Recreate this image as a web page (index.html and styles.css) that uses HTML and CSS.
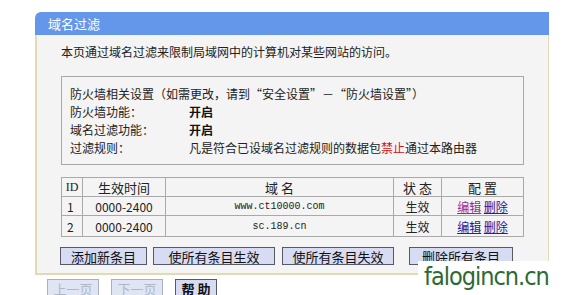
FILE: index.html
```html
<!DOCTYPE html>
<html>
<head>
    <meta charset="UTF-8">
    <title>域名过滤</title>
    <link rel="stylesheet" href="styles.css">
</head>
<body>
    <div class="panel">
        <div class="panel-title">域名过滤</div>
        <div class="panel-body">
            <p class="intro">本页通过域名过滤来限制局域网中的计算机对某些网站的访问。</p>

            <div class="info-box">
                <div class="info-row">防火墙相关设置（如需更改，请到“安全设置”－“防火墙设置”）</div>
                <div class="info-row"><span class="label">防火墙功能：</span><b>开启</b></div>
                <div class="info-row"><span class="label">域名过滤功能：</span><b>开启</b></div>
                <div class="info-row"><span class="label">过滤规则：</span>凡是符合已设域名过滤规则的数据包<span class="red">禁止</span>通过本路由器</div>
            </div>

            <table class="rules">
                <tr class="head">
                    <td class="c-id">ID</td>
                    <td class="c-time">生效时间</td>
                    <td class="c-domain">域 名</td>
                    <td class="c-state">状 态</td>
                    <td class="c-conf">配 置</td>
                </tr>
                <tr>
                    <td class="c-id left">1</td>
                    <td>0000-2400</td>
                    <td class="mono">www.ct10000.com</td>
                    <td>生效</td>
                    <td><a href="#" class="visited">编辑</a> <a href="#">删除</a></td>
                </tr>
                <tr class="last">
                    <td class="c-id left">2</td>
                    <td>0000-2400</td>
                    <td class="mono">sc.189.cn</td>
                    <td>生效</td>
                    <td><a href="#">编辑</a> <a href="#">删除</a></td>
                </tr>
            </table>

            <div class="actions">
                <button class="btn b-add">添加新条目</button>
                <button class="btn b-on">使所有条目生效</button>
                <button class="btn b-off">使所有条目失效</button>
                <button class="btn b-del">删除所有条目</button>
            </div>
        </div>
    </div>

    <div class="pager">
        <button class="btn small" disabled>上一页</button>
        <button class="btn small" disabled>下一页</button>
        <button class="btn help">帮 助</button>
    </div>

    <div class="mark">falogincn.cn</div>
</body>
</html>
```

FILE: styles.css
```css
body {
    margin: 0;
    background-color: #ffffff;
    font-family: "Noto Sans CJK SC", "Liberation Sans", sans-serif;
    font-size: 12px;
    color: #222222;
    width: 588px;
    height: 295px;
    overflow: hidden;
    position: relative;
}

.panel {
    margin: 12px 0 0 35px;
    width: 514px;
}

.panel-title {
    height: 23px;
    line-height: 23px;
    padding-left: 13px;
    background-color: #6496ea;
    color: #ffffff;
    font-size: 13px;
    border-top-left-radius: 6px;
}

.panel-body {
    background-color: #f4f4f4;
    border-left: 2px solid #e4d9b2;
    border-right: 1px solid #e4d9b2;
    border-bottom: 2px solid #e4d9b2;
    padding: 8px 24px 8px 24px;
}

.intro {
    margin: 0;
    line-height: 18px;
}

.info-box {
    margin-top: 15px;
    border: 1px solid #a8a8a8;
    padding: 8px 8px 7px 8px;
    height: 72px;
    line-height: 18px;
}

.info-box b {
    font-weight: bold;
    color: #111111;
}

.label {
    display: inline-block;
    width: 119px;
}

.red {
    color: #d81010;
}

.rules {
    margin-top: 12px;
    width: 463px;
    border-collapse: collapse;
}

.rules td {
    border: 1px solid #a9a9a9;
    text-align: center;
    height: 18px;
    padding: 0;
    line-height: 17px;
}

.rules tr.last td {
    height: 20px;
}

.rules .head td {
    font-size: 13px;
}

.c-id { width: 20px; }
.c-time { width: 82px; }
.c-domain { width: 227px; }
.c-state { width: 47px; }

.rules td.left {
    text-align: left;
    padding-left: 5px;
    width: 15px;
}

.rules .head .c-id {
    font-family: "Liberation Serif", serif;
    font-size: 12px;
}

.mono {
    font-family: "Liberation Mono", monospace;
    font-size: 10px;
}

.rules a {
    color: #2020a0;
}

.rules a.visited {
    color: #9a2a9a;
}

.actions {
    display: flex;
    margin-top: 10px;
    margin-left: -1px;
}

.btn {
    height: 18px;
    padding: 0;
    font-family: "Noto Sans CJK SC", sans-serif;
    font-size: 13px;
    line-height: 15px;
    color: #111111;
    background-color: #d8dcf2;
    border: 1px solid #555a66;
    border-radius: 0;
}

.b-add { width: 87px; margin-right: 6px; }
.b-on { width: 122px; margin-right: 7px; }
.b-off { width: 112px; margin-right: 15px; }
.b-del { width: 104px; }

.pager {
    display: flex;
    gap: 12px;
    margin: 4px 0 0 47px;
}

.btn.small {
    width: 52px;
    color: #b0b8c8;
    background-color: #dfe5f2;
    border-color: #aab0c0;
}

.btn.help {
    width: 42px;
    font-weight: bold;
}

.mark {
    position: absolute;
    left: 418px;
    top: 261px;
    width: 170px;
    height: 34px;
    background-color: #ffffff;
    color: #2c6a34;
    font-family: "DejaVu Sans", sans-serif;
    font-size: 25px;
    font-stretch: condensed;
    letter-spacing: -1px;
    line-height: 32px;
    padding-left: 6px;
    box-sizing: border-box;
}
```
